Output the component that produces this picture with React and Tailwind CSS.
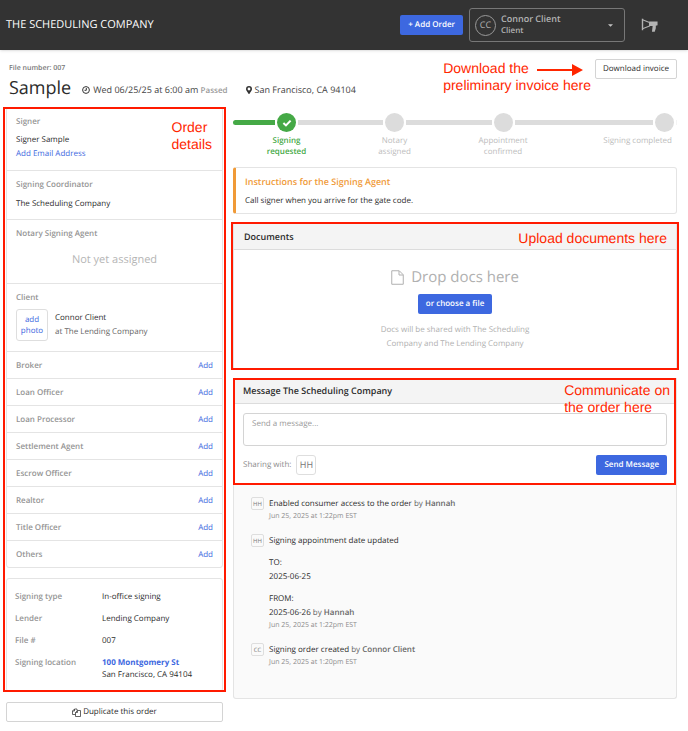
import React from "react";

const roles = [
  "Broker",
  "Loan Officer",
  "Loan Processor",
  "Settlement Agent",
  "Escrow Officer",
  "Realtor",
  "Title Officer",
  "Others",
];

function Note({ className, children }) {
  return (
    <p
      className={`absolute z-10 font-['Liberation_Sans',Arial,sans-serif] text-[14px] leading-[17px] whitespace-nowrap text-[#ff2600] ${className}`}
    >
      {children}
    </p>
  );
}

function Outline({ className }) {
  return <div className={`pointer-events-none absolute border-2 border-[#ff1a00] ${className}`} />;
}

function ClockIcon() {
  return (
    <svg viewBox="0 0 16 16" className="h-2 w-2 shrink-0" fill="none" stroke="#333" strokeWidth="2">
      <circle cx="8" cy="8" r="6.8" />
      <path d="M8.6 4v4.6H5" />
    </svg>
  );
}

function PinIcon() {
  return (
    <svg viewBox="0 0 12 16" className="h-2 w-[6px] shrink-0" fill="#333">
      <path
        fillRule="evenodd"
        d="M6 0a6 6 0 0 0-6 6c0 1.2.3 2 .8 3L5 15.4c.4.8 1.6.8 2 0L11.2 9c.5-1 .8-1.8.8-3a6 6 0 0 0-6-6Zm0 3.200a2.800 2.800 0 1 1 0 5.600 2.800 2.800 0 0 1 0-5.600Z"
      />
    </svg>
  );
}

function MegaphoneIcon() {
  return (
    <svg viewBox="0 0 48 40" className="h-[14px] w-[17px]" fill="none" stroke="#b3b3b3" strokeWidth="3">
      <path d="M4 2v33" strokeWidth="4" />
      <path d="M4 5l20 8M4 31l20-8M24 12v12" />
      <path d="M23 10h24v11l-5 1v7l-3 10h-8l2-16H23z" fill="#b3b3b3" stroke="none" />
    </svg>
  );
}

function FileIcon() {
  return (
    <svg viewBox="0 0 26 30" className="h-[15px] w-[13px]" fill="none" stroke="#b0b0b0" strokeWidth="2">
      <path d="M1.500 1.500h15l8 8v19h-23z" strokeLinejoin="round" />
      <path d="M16 2v8h8" />
    </svg>
  );
}

function CopyIcon() {
  return (
    <svg viewBox="0 0 18 18" className="h-[9px] w-[9px]" fill="none" stroke="#333" strokeWidth="1.500" strokeLinejoin="round">
      <path d="M7 13H1V6l4-4h5v3" />
      <path d="M5 2v4H1" />
      <path d="M7 9l4-4h6v12H7z" />
      <path d="M11 5v4H7" />
    </svg>
  );
}

function Section({ title, className = "", children }) {
  return (
    <section className={`border-b border-[#e4e4e4] px-[9px] pt-[7px] ${className}`}>
      <h2 className="font-semibold text-[#949494]">{title}</h2>
      {children}
    </section>
  );
}

function Bar({ color = "bg-[#dcdcdc]", className = "flex-1" }) {
  return <span className={`h-[5px] ${color} ${className}`} />;
}

function Step({ label, done, last }) {
  return (
    <li className={done ? "font-semibold text-[#45a946]" : "text-[#bcbcbc]"}>
      <div className="flex items-center gap-[2px]">
        <Bar color={done ? "bg-[#45a946]" : "bg-[#dcdcdc]"} className={done ? "flex-1 rounded-l-full" : "flex-1"} />
        <span
          className={`flex h-[19px] w-[19px] items-center justify-center rounded-full ${done ? "bg-[#45a946]" : "bg-[#dcdcdc]"}`}
        >
          {done && (
            <svg viewBox="0 0 12 10" className="h-2 w-[10px]" fill="none" stroke="#fff" strokeWidth="2.600">
              <path d="M1.500 5l3.200 3L10.500 2" />
            </svg>
          )}
        </span>
        <Bar className={last ? "w-px opacity-30" : "flex-1"} />
      </div>
      <p className={`mt-[3px] leading-[11px] whitespace-pre-line ${last ? "pr-[5px] text-right" : "text-center"}`}>{label}</p>
    </li>
  );
}

function Entry({ initials, children, time }) {
  return (
    <li className="flex items-start gap-[5px]">
      <span className="flex h-[13px] w-[13px] shrink-0 items-center justify-center rounded-[2px] border border-[#dedede] text-[6px] text-[#777]">
        {initials}
      </span>
      <div>
        {children}
        <p className="text-[7px] leading-[11px] text-[#8c8c8c]">{time}</p>
      </div>
    </li>
  );
}

function By({ name }) {
  return (
    <span className="text-[#666]">
      by <span className="font-semibold">{name}</span>
    </span>
  );
}

function Detail({ label, children }) {
  return (
    <div className="flex">
      <dt className="w-[87px] shrink-0 font-semibold text-[#949494]">{label}</dt>
      <dd>{children}</dd>
    </div>
  );
}

const primary = "rounded-[2px] bg-[#3d68e0] font-semibold text-white h-5 px-2";

export default function App() {
  return (
    <div className="min-h-screen bg-white font-['Open_Sans',sans-serif] text-[8px] leading-[14px] text-[#2b2b2b] [text-rendering:geometricPrecision] [&_button]:[text-rendering:geometricPrecision] [&_textarea]:[text-rendering:geometricPrecision]">
      <header className="flex h-[50px] items-center bg-[#333] pr-[30px] pl-[6px] shadow-sm">
        <h1 className="flex-1 text-[11px] text-white">THE SCHEDULING COMPANY</h1>
        <button className={`${primary} mr-[6px]`}>+ Add Order</button>
        <button className="mr-4 flex h-[34px] w-[156px] items-center rounded-[3px] border border-[#777] pr-[11px] pl-[5px] text-left text-[#b3b3b3]">
          <span className="mr-[5px] flex h-[21px] w-[21px] items-center justify-center rounded-full border border-[#999] text-[9px]">
            CC
          </span>
          <span className="flex-1 leading-[12px]">
            <span className="block text-[9px] font-semibold">Connor Client</span>
            <span className="block font-semibold">Client</span>
          </span>
          <svg viewBox="0 0 8 4" className="h-[3px] w-[5px]" fill="#c4c4c4">
            <path d="M0 0h8L4 4z" />
          </svg>
        </button>
        <button aria-label="Announcements">
          <MegaphoneIcon />
        </button>
      </header>

      <main className="pr-[11px] pb-2 pl-[6px]">
        <div className="relative flex h-[57px] items-start justify-between">
          <div className="pt-[13px] pl-[3px]">
            <p className="text-[7px] leading-[12px] font-semibold text-[#777]">File number: 007</p>
            <div className="flex items-baseline text-[9px] leading-[26px] text-[#444]">
              <h2 className="mr-[11px] text-[18px] font-medium text-[#2b2b2b]">Sample</h2>
              <p className="mr-[18px] flex items-center gap-[3px]">
                <ClockIcon />
                <span>
                  Wed 06/25/25 at 6:00 am <span className="text-[8px] font-semibold text-[#999]">Passed</span>
                </span>
              </p>
              <p className="flex items-center gap-[3px]">
                <PinIcon />
                San Francisco, CA 94104
              </p>
            </div>
          </div>
          <button className="mt-[9px] h-5 rounded-[2px] border border-[#d4d4d4] px-[7px] font-medium">Download invoice</button>
          <Note className="top-[10px] right-[86px]">
            Download the
            <br />
            preliminary invoice here
          </Note>
          <svg viewBox="0 0 46 12" className="absolute top-[14px] right-[94px] h-3 w-[46px]" fill="#ff2600">
            <path d="M0 5h35V0l11 6-11 6V7H0z" />
          </svg>
        </div>

        <div className="grid grid-cols-[minmax(0,217fr)_minmax(0,444fr)] items-start gap-[10px]">
          <aside>
            <div className="relative">
              <div className="rounded-[3px] border border-[#e4e4e4]">
                <Section title="Signer" className="pb-[9px]">
                  <p className="mt-1">Signer Sample</p>
                  <a href="#email" className="block text-[#3d68e0]">Add Email Address</a>
                </Section>
                <Section title="Signing Coordinator" className="pb-2">
                  <p className="mt-[5px]">The Scheduling Company</p>
                </Section>
                <Section title="Notary Signing Agent" className="pb-[14px]">
                  <p className="mt-[10px] text-center text-[11px] leading-[18px] text-[#b5b5b5]">Not yet assigned</p>
                </Section>
                <Section title="Client" className="pb-[10px]">
                  <div className="mt-1 flex items-center gap-[7px]">
                    <button className="h-8 w-8 rounded-[3px] border border-[#dedede] leading-[11px] text-[#3d68e0]">
                      add photo
                    </button>
                    <div>
                      <p>Connor Client</p>
                      <p className="text-[#666]">at The Lending Company</p>
                    </div>
                  </div>
                </Section>
                <ul>
                  {roles.map((role) => (
                    <li
                      key={role}
                      className="flex h-[27px] items-center justify-between border-b border-[#e4e4e4] px-[9px] pt-px last:h-[26px] last:border-b-0"
                    >
                      <span className="font-semibold text-[#949494]">{role}</span>
                      <a href="#add" className="font-medium text-[#3d68e0]">Add</a>
                    </li>
                  ))}
                </ul>
              </div>
              <dl className="mt-[10px] flex flex-col gap-[10px] rounded-[3px] border border-[#e4e4e4] px-2 pt-3 pb-[10px] leading-[12px]">
                <Detail label="Signing type">In-office signing</Detail>
                <Detail label="Lender">Lending Company</Detail>
                <Detail label="File #">007</Detail>
                <Detail label="Signing location">
                  <a href="#map" className="block font-bold text-[#3d68e0]">100 Montgomery St</a>
                  San Francisco, CA 94104
                </Detail>
              </dl>
              <Outline className="inset-x-[-3px] inset-y-0" />
              <Note className="top-[12px] right-[11px]">
                Order
                <br />
                details
              </Note>
            </div>
            <button className="mt-[10px] flex h-5 w-full items-center justify-center gap-[2px] rounded-[2px] border border-[#d4d4d4] font-medium">
              <CopyIcon />
              Duplicate this order
            </button>
          </aside>

          <div className="pt-[6px]">
            <ol className="grid grid-cols-[107fr_109fr_108fr_120fr]">
              <Step label={"Signing\nrequested"} done />
              <Step label={"Notary\nassigned"} />
              <Step label={"Appointment\nconfirmed"} />
              <Step label="Signing completed" last />
            </ol>

            <section className="mt-[10px] rounded-[3px] border border-l-3 border-[#e4e4e4] border-l-[#f09a37] px-[9px] pt-[7px] pb-[5px]">
              <h2 className="text-[9px] font-semibold text-[#f09a37]">Instructions for the Signing Agent</h2>
              <p className="mt-[5px]">Call signer when you arrive for the gate code.</p>
            </section>

            <section className="relative mt-[10px] border border-t-0 border-[#e4e4e4]">
              <h2 className="flex h-[26px] items-center border-b border-[#dcdcdc] bg-[#f4f4f4] px-[10px] pt-px text-[9px] font-semibold">
                Documents
              </h2>
              <div className="flex flex-col items-center pt-[17px] pb-[17px]">
                <p className="flex items-center gap-[7px] text-[15px] leading-[20px] text-[#b0b0b0]">
                  <FileIcon />
                  Drop docs here
                </p>
                <button className={`${primary} mt-[7px]`}>or choose a file</button>
                <p className="mt-[9px] w-[160px] text-center text-[#b0b0b0]">
                  Docs will be shared with The Scheduling Company and The Lending Company
                </p>
              </div>
              <Outline className="inset-x-[-3px] inset-y-[-2px]" />
              <Note className="top-[6px] right-[9px]">Upload documents here</Note>
            </section>

            <section className="mt-[9px]">
              <div className="relative border-x border-[#e4e4e4]">
                <h2 className="flex h-[26px] items-center border-b border-[#dcdcdc] bg-[#f4f4f4] px-[9px] pt-px text-[9px] font-semibold">
                  Message The Scheduling Company
                </h2>
                <div className="px-[9px] pt-[9px] pb-[10px]">
                  <textarea
                    aria-label="Message"
                    placeholder="Send a message..."
                    className="block h-[33px] w-full resize-none rounded-[3px] border border-[#d4d4d4] px-2 py-[3px] placeholder:text-[#999]"
                  />
                  <div className="mt-[9px] flex items-center text-[#8c8c8c]">
                    <span className="mr-[5px]">Sharing with:</span>
                    <span className="flex h-5 w-5 items-center justify-center rounded-[3px] border border-[#dedede] text-[9px] text-[#777]">
                      HH
                    </span>
                    <button className={`${primary} ml-auto`}>Send Message</button>
                  </div>
                </div>
                <Outline className="inset-y-0 right-0 left-[-1px]" />
                <Note className="top-[4px] right-[6px]">
                  Communicate on
                  <br />
                  the order here
                </Note>
              </div>
              <ul className="flex flex-col gap-3 rounded-b-[3px] border border-t-0 border-[#e4e4e4] bg-[#fafafa] px-[17px] pt-3 pb-[30px]">
                <Entry initials="HH" time="Jun 25, 2025 at 1:22pm EST">
                  <p>
                    Enabled consumer access to the order <By name="Hannah" />
                  </p>
                </Entry>
                <Entry initials="HH" time="Jun 25, 2025 at 1:22pm EST">
                  <p>Signing appointment date updated</p>
                  <p className="mt-2">
                    TO:
                    <br />
                    2025-06-25
                  </p>
                  <p className="mt-2">
                    FROM:
                    <br />
                    2025-06-26 <By name="Hannah" />
                  </p>
                </Entry>
                <Entry initials="CC" time="Jun 25, 2025 at 1:20pm EST">
                  <p>
                    Signing order created <By name="Connor Client" />
                  </p>
                </Entry>
              </ul>
            </section>
          </div>
        </div>
      </main>
    </div>
  );
}
